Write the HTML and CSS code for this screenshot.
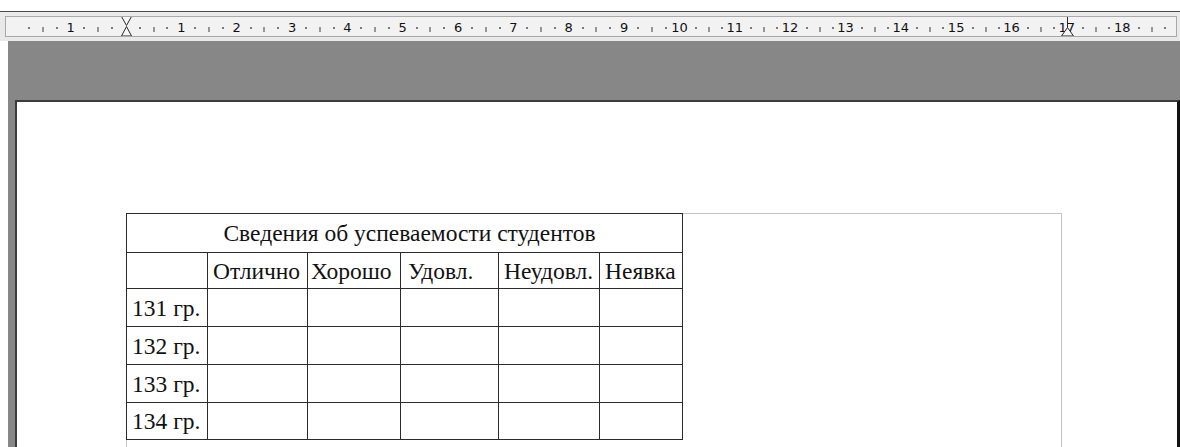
FILE: index.html
```html
<!DOCTYPE html>
<html lang="ru">
<head>
<meta charset="utf-8">
<title>Документ</title>
<link rel="stylesheet" href="styles.css">
</head>
<body>
<div class="topbar"></div>
<div class="ruler-bar">
  <div class="ruler">
    <div class="scale">
      <span class="cm"><span class="q"></span><span class="q"><i class="dot"></i></span><span class="q"><i class="tick"></i></span><span class="q"><i class="dot"></i></span></span>
      <span class="cm"><span class="q"></span><span class="q"><i class="dot"></i></span><span class="q"><i class="tick"></i></span><span class="q"><i class="dot"></i></span></span>
      <span class="cm"><span class="q"><b>1</b></span><span class="q"><i class="dot"></i></span><span class="q"><i class="tick"></i></span><span class="q"><i class="dot"></i></span></span>
      <span class="cm"><span class="q"></span><span class="q"><i class="dot"></i></span><span class="q"><i class="tick"></i></span><span class="q"><i class="dot"></i></span></span>
      <span class="cm"><span class="q"><b>1</b></span><span class="q"><i class="dot"></i></span><span class="q"><i class="tick"></i></span><span class="q"><i class="dot"></i></span></span>
      <span class="cm"><span class="q"><b>2</b></span><span class="q"><i class="dot"></i></span><span class="q"><i class="tick"></i></span><span class="q"><i class="dot"></i></span></span>
      <span class="cm"><span class="q"><b>3</b></span><span class="q"><i class="dot"></i></span><span class="q"><i class="tick"></i></span><span class="q"><i class="dot"></i></span></span>
      <span class="cm"><span class="q"><b>4</b></span><span class="q"><i class="dot"></i></span><span class="q"><i class="tick"></i></span><span class="q"><i class="dot"></i></span></span>
      <span class="cm"><span class="q"><b>5</b></span><span class="q"><i class="dot"></i></span><span class="q"><i class="tick"></i></span><span class="q"><i class="dot"></i></span></span>
      <span class="cm"><span class="q"><b>6</b></span><span class="q"><i class="dot"></i></span><span class="q"><i class="tick"></i></span><span class="q"><i class="dot"></i></span></span>
      <span class="cm"><span class="q"><b>7</b></span><span class="q"><i class="dot"></i></span><span class="q"><i class="tick"></i></span><span class="q"><i class="dot"></i></span></span>
      <span class="cm"><span class="q"><b>8</b></span><span class="q"><i class="dot"></i></span><span class="q"><i class="tick"></i></span><span class="q"><i class="dot"></i></span></span>
      <span class="cm"><span class="q"><b>9</b></span><span class="q"><i class="dot"></i></span><span class="q"><i class="tick"></i></span><span class="q"><i class="dot"></i></span></span>
      <span class="cm"><span class="q"><b>10</b></span><span class="q"><i class="dot"></i></span><span class="q"><i class="tick"></i></span><span class="q"><i class="dot"></i></span></span>
      <span class="cm"><span class="q"><b>11</b></span><span class="q"><i class="dot"></i></span><span class="q"><i class="tick"></i></span><span class="q"><i class="dot"></i></span></span>
      <span class="cm"><span class="q"><b>12</b></span><span class="q"><i class="dot"></i></span><span class="q"><i class="tick"></i></span><span class="q"><i class="dot"></i></span></span>
      <span class="cm"><span class="q"><b>13</b></span><span class="q"><i class="dot"></i></span><span class="q"><i class="tick"></i></span><span class="q"><i class="dot"></i></span></span>
      <span class="cm"><span class="q"><b>14</b></span><span class="q"><i class="dot"></i></span><span class="q"><i class="tick"></i></span><span class="q"><i class="dot"></i></span></span>
      <span class="cm"><span class="q"><b>15</b></span><span class="q"><i class="dot"></i></span><span class="q"><i class="tick"></i></span><span class="q"><i class="dot"></i></span></span>
      <span class="cm"><span class="q"><b>16</b></span><span class="q"><i class="dot"></i></span><span class="q"><i class="tick"></i></span><span class="q"><i class="dot"></i></span></span>
      <span class="cm"><span class="q"><b>17</b></span><span class="q"><i class="dot"></i></span><span class="q"><i class="tick"></i></span><span class="q"><i class="dot"></i></span></span>
      <span class="cm"><span class="q"><b>18</b></span><span class="q"><i class="dot"></i></span><span class="q"><i class="tick"></i></span><span class="q"><i class="dot"></i></span></span>
    </div>
    <!-- right page margin on the ruler -->
    <div class="margin-right"></div>
    <!-- first-line / left indent marker -->
    <svg class="indent-left" width="11" height="21" viewBox="0 0 11 21">
      <polygon points="0.5,0.5 10.5,0.5 5.5,9.5" fill="#f6f6f6" stroke="#2a2a2a"/>
      <polygon points="5.5,10.5 10.5,20 0.5,20" fill="#f6f6f6" stroke="#2a2a2a"/>
    </svg>
    <!-- right indent marker -->
    <svg class="indent-right" width="15" height="21" viewBox="0 0 15 21">
      <line x1="7.5" y1="0" x2="7.5" y2="12" stroke="#2a2a2a"/>
      <polygon points="7.5,11.5 13.5,20 1.5,20" fill="#f6f6f6" stroke="#2a2a2a"/>
    </svg>
  </div>
</div>
<div class="workspace">
  <div class="page">
    <div class="text-area">
      <table class="grades">
        <colgroup>
          <col class="c-group">
          <col class="c-excellent">
          <col class="c-good">
          <col class="c-fair">
          <col class="c-poor">
          <col class="c-absent">
        </colgroup>
        <tr class="r-title"><td colspan="6" class="title">Сведения об успеваемости студентов</td></tr>
        <tr class="r-head"><td></td><td>Отлично</td><td class="tight">Хорошо</td><td class="wide">Удовл.</td><td>Неудовл.</td><td>Неявка</td></tr>
        <tr class="r-data"><td>131 гр.</td><td></td><td></td><td></td><td></td><td></td></tr>
        <tr class="r-data"><td>132 гр.</td><td></td><td></td><td></td><td></td><td></td></tr>
        <tr class="r-data"><td>133 гр.</td><td></td><td></td><td></td><td></td><td></td></tr>
        <tr class="r-last"><td>134 гр.</td><td></td><td></td><td></td><td></td><td></td></tr>
      </table>
    </div>
  </div>
</div>
</body>
</html>
```

FILE: styles.css
```css
html, body {
  margin: 0;
  padding: 0;
  background: #ffffff;
  overflow: hidden;
  height: 447px;
}

.topbar {
  height: 11px;
  background: #ffffff;
}

/* ---------- ruler ---------- */
.ruler-bar {
  border-top: 1px solid #4a4a4a;
  background: #e9e9e9;
  padding: 4px 3px 4px 5px;
}

.ruler {
  position: relative;
  width: 1170px;
  height: 19px;
  border: 1px solid #a9a9a9;
  background: #f2f2f2;
  overflow: hidden;
  font-family: "DejaVu Sans", "Liberation Sans", sans-serif;
  font-size: 13px;
  color: #111111;
}

.scale {
  display: flex;
  height: 100%;
  margin-left: -46.05px;
}

.cm {
  flex: none;
  width: 55.35px;
  display: grid;
  grid-template-columns: repeat(4, 1fr);
  height: 100%;
}

.q {
  display: flex;
  align-items: center;
  height: 100%;
}

.q > * {
  transform: translateX(-50%);
}

.q b {
  font-weight: normal;
  line-height: 1;
  margin-top: 2px;
}

.dot {
  display: block;
  width: 2px;
  height: 2px;
  background: #7a7a7a;
  margin-top: 3px;
}

.tick {
  display: block;
  width: 1px;
  height: 5px;
  background: #3a3a3a;
  margin-top: 5px;
}

.margin-right {
  position: absolute;
  left: 1061px;
  top: -1px;
  right: -1px;
  bottom: -1px;
  border: 1px solid #8c8c8c;
}

.indent-left {
  position: absolute;
  left: 115px;
  top: -1px;
}

.indent-right {
  position: absolute;
  left: 1054px;
  top: -1px;
}

/* ---------- document area ---------- */
.workspace {
  margin-left: 8px;
  background: #878787;
  padding: 59px 0 0 7px;
  height: 347px;
}

.page {
  background: #ffffff;
  border-top: 2px solid #3c3c3c;
  border-left: 2px solid #3c3c3c;
  border-right: 3px solid #111111;
  padding: 111px 0 0 109px;
  height: 234px;
}

.text-area {
  width: 934px;
  height: 234px;
  border: 1px solid #c4c4c4;
  border-bottom: none;
}

.grades {
  margin: -1px 0 0 -1px;
  border-collapse: collapse;
  table-layout: fixed;
  width: 557px;
  font-family: "Liberation Serif", "Times New Roman", serif;
  font-size: 23.5px;
  color: #111111;
}

.grades td {
  border: 1px solid #2b2b2b;
  padding: 0 4px 0 5px;
  white-space: nowrap;
  overflow: hidden;
  vertical-align: middle;
  line-height: 26px;
}

.grades td.tight { padding-left: 3px; }
.grades td.wide { padding-left: 7px; }

.c-group { width: 81px; }
.c-excellent { width: 100px; }
.c-good { width: 93px; }
.c-fair { width: 98px; }
.c-poor { width: 101px; }
.c-absent { width: 83px; }

.r-title { height: 39px; }
.r-head { height: 36px; }
.r-data { height: 38px; }
.r-last { height: 37px; }

.grades .title {
  text-align: center;
  padding-left: 14px;
}
```
